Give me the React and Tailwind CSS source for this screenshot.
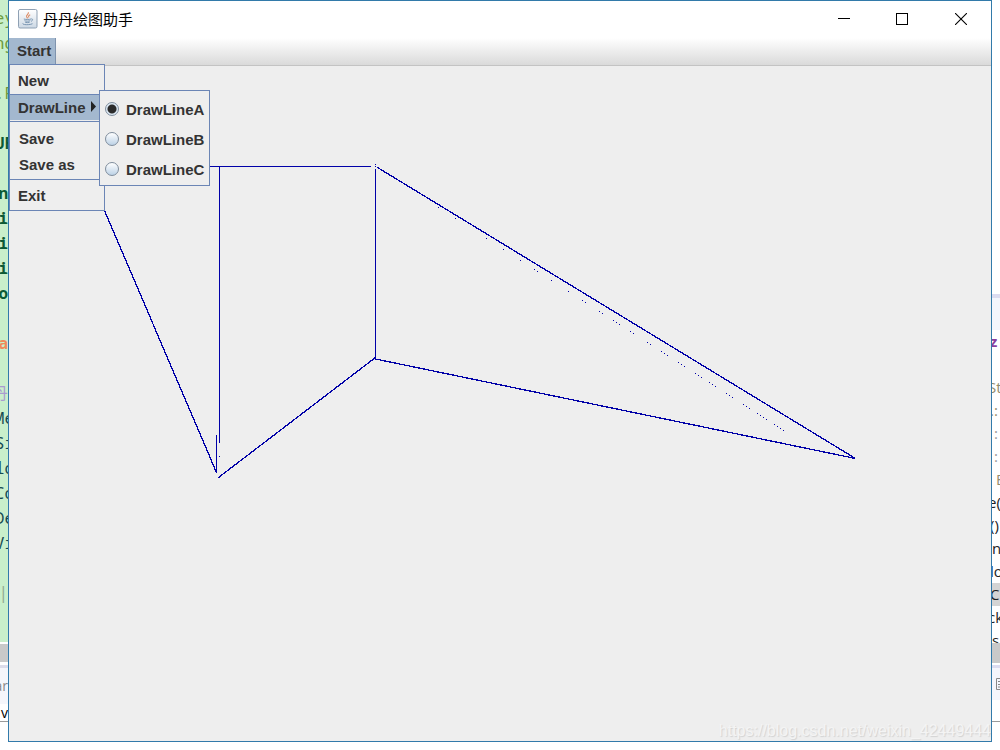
import { useState } from "react";

const LEFT_CODE = [
  ["ey", "text-[#6d9a3d]"],
  ["ng", "text-[#6d9a3d]"],
  ["", ""],
  [".F", "text-[#6d9a3d]"],
  ["", ""],
  ["UF", "text-[#0c5a35] font-bold"],
  ["", ""],
  ["n", "text-[#0c5a35] font-bold"],
  ["i", "text-[#0c5a35] font-bold"],
  ["i", "text-[#0c5a35] font-bold"],
  ["i", "text-[#0c5a35] font-bold"],
  ["o", "text-[#0c5a35] font-bold"],
  ["", ""],
  ["a", "text-[#f08a5a] font-bold"],
  ["", ""],
  ["丹", "text-[#a99bd0]"],
  ["Me", "text-[#164a52]"],
  ["Si", "text-[#164a52]"],
  ["lo", "text-[#164a52]"],
  ["Co", "text-[#164a52]"],
  ["De", "text-[#164a52]"],
  ["Vi", "text-[#164a52]"],
  ["", ""],
  ["|", "text-[#8fa890]"],
];

const RIGHT_CODE = [
  ["z", "-ml-0.5 text-[#8b3f9c] font-bold"],
  ["", ""],
  ["St", "-ml-1 text-[#948c6c]"],
  [".:", "-ml-0.5 text-[#948c6c]"],
  [" :", "-ml-0.5 text-[#999999]"],
  [" :", "-ml-0.5 text-[#999999]"],
  [" E", "text-[#948c6c]"],
  ["e(", "-ml-1 text-[#222222]"],
  ["()", "-ml-0.5 text-[#222222]"],
  ["n", "text-[#222222]"],
  ["lo", "-ml-0.5 text-[#222222]"],
  ["C", "-ml-0.5 text-[#222222] bg-[#d4d4d4]"],
  ["ck", "-ml-1 text-[#222222]"],
  ["s", "text-[#222222]"],
];

const SPECKS = [
  [438, 207], [455, 218], [486, 238], [503, 249], [520, 260], [534, 269], [537, 271],
  [551, 280], [568, 291], [582, 300], [585, 302], [599, 311], [602, 313], [613, 320],
  [616, 322], [619, 324], [630, 331], [633, 333], [647, 342], [650, 344], [661, 351],
  [664, 353], [667, 355], [678, 362], [681, 364], [684, 366], [695, 373], [698, 375],
  [701, 377], [709, 382], [712, 384], [715, 386], [726, 393], [729, 395], [732, 397],
  [743, 404], [746, 406], [749, 408], [757, 413], [760, 415], [763, 417], [766, 419],
  [774, 424], [777, 426], [780, 428], [783, 430], [375, 164], [375, 166], [219, 456],
];

function LeftEditor() {
  return (
    <div aria-hidden="true" className="flex w-2 shrink-0 flex-col overflow-hidden bg-white">
      <div className="min-h-0 flex-1 overflow-hidden bg-[#c9efcb] pt-[5px] font-['Noto_Sans_Mono','DejaVu_Sans_Mono','Noto_Sans_CJK_SC',monospace] text-base">
        {LEFT_CODE.map(([text, tone], i) => (
          <div
            key={i}
            className={"flex h-[25px] items-center justify-end whitespace-pre " + (text.length > 1 ? "-mr-1.5" : "")}
          >
            <span className={tone}>{text}</span>
          </div>
        ))}
      </div>
      <div className="mt-0.5 h-[18px] shrink-0 bg-[#c9c9c9]" />
      <div className="mt-[3px] h-[3px] shrink-0 bg-[#dcdcea]" />
      <div className="flex h-9 shrink-0 items-center justify-end bg-[#f5f6fb] font-['Open_Sans',sans-serif] text-sm text-[#8a8a8a]">ar</div>
      <div className="flex h-[18px] shrink-0 items-center justify-end border-b border-[#9a9a9a] font-['Open_Sans',sans-serif] text-sm text-black">v</div>
      <div className="h-7 shrink-0" />
    </div>
  );
}

function RightEditor() {
  return (
    <div aria-hidden="true" className="flex w-2 shrink-0 flex-col overflow-hidden bg-white">
      <div className="h-[294px] shrink-0" />
      <div className="h-1 shrink-0 bg-[#dcdcf0]" />
      <div className="h-8 shrink-0 bg-[#f3f6fc]" />
      <div className="min-h-0 flex-1 overflow-hidden font-['Open_Sans',sans-serif] text-[15px]">
        {RIGHT_CODE.map(([text, tone], i) => (
          <div key={i} className={"flex h-[23px] items-center whitespace-pre " + tone}>
            {text}
          </div>
        ))}
      </div>
      <div className="h-5 shrink-0 bg-[#c9c9c9]" />
      <div className="mt-0.5 h-[3px] shrink-0 bg-[#dcdcf0]" />
      <div className="flex h-8 shrink-0 items-center justify-end bg-[#f5f6fc]">
        <svg width="4" height="12" viewBox="0 0 4 12" className="block">
          <path d="M4 .5H.5v11H4M2 3.5h2M2 6.5h2M2 9h2" stroke="#888" fill="none" />
        </svg>
      </div>
      <div className="h-[22px] shrink-0 border-b border-[#9a9a9a]" />
      <div className="h-7 shrink-0" />
    </div>
  );
}

function JavaIcon() {
  return (
    <svg width="20" height="20" viewBox="0 0 20 20" className="block">
      <defs>
        <linearGradient id="java-tile" x1="0" y1="0" x2="0" y2="1">
          <stop offset="0" stopColor="#ffffff" />
          <stop offset="1" stopColor="#ccd8e4" />
        </linearGradient>
      </defs>
      <rect x="0.5" y="0.5" width="18.5" height="18.5" rx="1.5" fill="url(#java-tile)" stroke="#8fa1b4" />
      <path d="M10.300 3.200c.8 2-2.600 2.700-1.700 4.600.3.500.8.900 1 1.500M12.200 5.700c-1.800.8-2 1.700-1.200 2.800" fill="none" stroke="#dd8a62" strokeWidth="1.100" />
      <path d="M5.800 10c1.500.6 5.800.6 7.200 0M6.500 11.700c1.500.6 4.500.6 5.800 0M7.200 13.300c1.200.4 3.200.4 4.400 0M13.200 9.900c2-.3 1.800 1.800-.2 2.400M5 14.400c-1.700 1.400 6.500 1.900 9.500.3" fill="none" stroke="#6f8dab" strokeWidth="0.900" />
    </svg>
  );
}

function TitleBar() {
  return (
    <header className="flex h-[37px] items-center bg-white pb-0.5 pl-[9px]">
      <JavaIcon />
      <h1 className="ml-[5px] flex-1 font-['Noto_Sans_CJK_SC',sans-serif] text-[15px] leading-5 font-normal text-black">
        丹丹绘图助手
      </h1>
      <button type="button" aria-label="Minimize" className="flex h-full w-[58px] items-center justify-center">
        <svg width="12" height="12" shapeRendering="crispEdges"><path d="M0 5.500h12" stroke="#000" /></svg>
      </button>
      <button type="button" aria-label="Maximize" className="flex h-full w-[58px] items-center justify-center">
        <svg width="12" height="12" shapeRendering="crispEdges"><path d="M.5.5h11v11H.5z" stroke="#000" fill="none" /></svg>
      </button>
      <button type="button" aria-label="Close" className="flex h-full w-[60px] items-center justify-center">
        <svg width="12" height="12"><path d="M0 0l12 12M12 0L0 12" stroke="#000" strokeWidth="1.100" /></svg>
      </button>
    </header>
  );
}

function LineMenu() {
  const [mode, setMode] = useState("DrawLineA");
  return (
    <div className="absolute top-[-4px] left-[89px] border border-[#6b85b5] bg-[#eeeeee] pt-[3px] pb-px">
      {["DrawLineA", "DrawLineB", "DrawLineC"].map((name) => (
        <label key={name} className="flex h-[30px] items-center gap-[7px] pr-[5px] pl-[5px] whitespace-nowrap">
          <input
            type="radio"
            name="line-mode"
            value={name}
            checked={mode === name}
            onChange={() => setMode(name)}
            className="size-3.5 appearance-none rounded-full border border-[#7f8d9d] bg-linear-to-b from-white to-[#bdd2e6] checked:bg-[radial-gradient(circle,#2b2b2b_0_4px,#dce8f3_5px)]"
          />
          <span className="pt-0.5">{name}</span>
        </label>
      ))}
    </div>
  );
}

function StartMenu() {
  return (
    <div className="absolute top-[26px] left-0 z-10 w-24 border border-[#6b85b5] bg-[#eeeeee]">
      <button type="button" className="flex h-[29px] w-full items-center pt-0.5 pl-2">New</button>
      <div className="relative">
        <button type="button" aria-haspopup="menu" aria-expanded="true" className="flex h-[26px] w-full items-center justify-between border-t border-[#6b85b5] bg-[#a3b8cf] pr-2 pl-2">
          DrawLine
          <svg width="5" height="11" className="mb-0.5"><path d="M0 0l5 5.500-5 5.500z" fill="#222" /></svg>
        </button>
        <LineMenu />
      </div>
      <hr className="mt-px border-[#6b85b5]" />
      <div className="pt-1 pb-px">
        <button type="button" className="flex h-[26px] w-full items-center pl-[9px]">Save</button>
        <button type="button" className="flex h-[26px] w-full items-center pl-[9px]">Save as</button>
      </div>
      <hr className="border-[#6b85b5]" />
      <button type="button" className="flex h-[30px] w-full items-center pt-0.5 pl-2">Exit</button>
    </div>
  );
}

function MenuBar() {
  return (
    <nav className="relative flex h-7 border-b border-[#c3c3c3] bg-linear-to-b from-white to-[#dadada] text-[15px] leading-5 font-bold text-[#333333]">
      <button type="button" aria-haspopup="menu" aria-expanded="true" className="h-[26px] border-r border-[#7f93ad] bg-[#a3b8cf] pr-1 pl-2">
        Start
      </button>
      <StartMenu />
    </nav>
  );
}

function Canvas() {
  return (
    <main className="relative min-h-0 flex-1 overflow-hidden bg-[#eeeeee]">
      <svg className="block h-full w-full" shapeRendering="crispEdges" role="img" aria-label="Drawing">
        <g transform="translate(-9 -66)" fill="none" stroke="#0000a8">
          <path d="M209 166.500H371M219.500 167V443M216.500 435V473M375.500 169V359" />
          <path
            d="M104.500 210.500L216.500 472.500M218.500 477.500L375.500 357.500M377.500 167.500L855.500 458.500M375.500 359L855.500 458.500"
            strokeWidth="1.300"
          />
          {SPECKS.map(([x, y]) => (
            <rect key={x + "-" + y} x={x} y={y} width="1" height="1" fill="#0000a8" stroke="none" />
          ))}
        </g>
      </svg>
      <p className="absolute right-0 bottom-0 font-['Liberation_Sans',sans-serif] text-base leading-5 whitespace-nowrap text-[#f4f4f4] [text-shadow:1px_1px_1px_#d2d2d2]">
        https://blog.csdn.net/weixin_42449444
      </p>
    </main>
  );
}

export default function App() {
  return (
    <div className="flex h-screen overflow-hidden bg-white">
      <LeftEditor />
      <section className="mb-2 flex min-w-0 flex-1 flex-col border border-[#327aaa] font-['Liberation_Sans',Arial,sans-serif]">
        <TitleBar />
        <MenuBar />
        <Canvas />
      </section>
      <RightEditor />
    </div>
  );
}
